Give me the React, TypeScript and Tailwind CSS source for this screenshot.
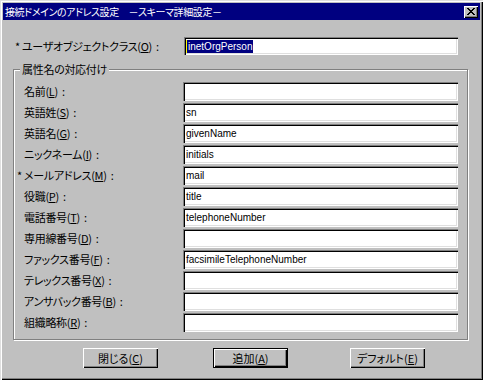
import React from "react";

const jp = "[font-family:'Noto_Sans_CJK_JP',sans-serif] [font-feature-settings:'palt']";

const rows = [
  { label: "名前", key: "L", value: "" },
  { label: "英語姓", key: "S", value: "sn" },
  { label: "英語名", key: "G", value: "givenName" },
  { label: "ニックネーム", key: "I", value: "initials" },
  { label: "メールアドレス", key: "M", value: "mail", required: true },
  { label: "役職", key: "P", value: "title" },
  { label: "電話番号", key: "T", value: "telephoneNumber" },
  { label: "専用線番号", key: "D", value: "" },
  { label: "ファックス番号", key: "F", value: "facsimileTelephoneNumber" },
  { label: "テレックス番号", key: "X", value: "" },
  { label: "アンサバック番号", key: "B", value: "" },
  { label: "組織略称", key: "R", value: "" },
];

function Label({ text, k, required }: { text: string; k: string; required?: boolean }) {
  return (
    <span className="relative whitespace-nowrap text-[11px] leading-none tracking-[-0.3px] text-black">
      {required && <span className="absolute -left-[7px] top-[3px]">*</span>}
      {text}(<span className="underline underline-offset-1">{k}</span>)<span className="ml-[4px]">:</span>
    </span>
  );
}

function Field({ value, className }: { value: string; className?: string }) {
  return (
    <div
      className={
        "flex h-[19px] items-center bg-white pl-[3px] shadow-[inset_1px_1px_0_#808080,inset_2px_2px_0_#000,inset_-1px_-1px_0_#fff,inset_-2px_-2px_0_#dfdfdf] " +
        (className ?? "")
      }
    >
      <span className="[font-family:'Liberation_Sans',sans-serif] text-[10px] leading-none text-black">
        {value}
      </span>
    </div>
  );
}

function Button({ text, k, isDefault }: { text: string; k: string; isDefault?: boolean }) {
  return (
    <div
      className={
        "flex h-[20px] w-[75px] items-center justify-center bg-[#c0c0c0] text-[11px] leading-none text-black " +
        (isDefault
          ? "shadow-[inset_0_0_0_1px_#000,inset_2px_2px_0_#fff,inset_-2px_-2px_0_#000,inset_-3px_-3px_0_#808080]"
          : "shadow-[inset_1px_1px_0_#fff,inset_-1px_-1px_0_#000,inset_-2px_-2px_0_#808080]")
      }
    >
      {text}(<span className="underline underline-offset-1">{k}</span>)
    </div>
  );
}

export default function App() {
  return (
    <div
      className={
        "flex h-[380px] w-[483px] flex-col overflow-hidden bg-[#c0c0c0] p-[3px] text-[11px] leading-none shadow-[inset_1px_1px_0_#dfdfdf,inset_2px_2px_0_#fff,inset_-1px_-1px_0_#000,inset_-2px_-2px_0_#808080] " +
        jp
      }
    >
      {/* title bar */}
      <div className="flex h-[17px] shrink-0 items-center justify-between bg-[#000080] pl-[2px] pr-[2px]">
        <span className="whitespace-nowrap text-[10px] leading-none tracking-[-0.4px] text-white">
          接続ドメインのアドレス設定　－スキーマ詳細設定－
        </span>
        <div className="flex h-[12px] w-[14px] items-center justify-center bg-[#c0c0c0] shadow-[inset_1px_1px_0_#fff,inset_-1px_-1px_0_#000,inset_-2px_-2px_0_#808080]">
          <svg width="8" height="7" viewBox="0 0 8 7" shapeRendering="crispEdges">
            <path d="M0 0h2v1H0zM6 0h2v1H6zM1 1h2v1H1zM5 1h2v1H5zM2 2h4v1H2zM3 3h2v1H3zM2 4h4v1H2zM1 5h2v1H1zM5 5h2v1H5zM0 6h2v1H0zM6 6h2v1H6z" fill="#000" />
          </svg>
        </div>
      </div>

      {/* object class */}
      <div className="mt-[17px] flex shrink-0 items-center pl-[19px] pr-[22px]">
        <div className="flex-1">
          <Label text="ユーザオブジェクトクラス" k="O" required />
        </div>
        <div className="flex h-[18px] w-[274px] items-center bg-white pl-[2px] shadow-[inset_1px_1px_0_#808080,inset_2px_2px_0_#000,inset_-1px_-1px_0_#fff,inset_-2px_-2px_0_#dfdfdf]">
          <span className="h-[13px] w-[1px] bg-[#ffff00]" />
          <span className="bg-[#000080] px-[1px] [font-family:'Liberation_Sans',sans-serif] text-[10px] leading-[13px] text-white">
            inetOrgPerson
          </span>
        </div>
      </div>

      {/* group box */}
      <div className="relative ml-[10px] mr-[12px] mt-[14px] shrink-0 border border-[#808080] pb-[7px] pl-[10px] pr-[9px] pt-[12px] shadow-[1px_1px_0_#fff,inset_1px_1px_0_#fff]">
        <span className="absolute -top-[6px] left-[6px] bg-[#c0c0c0] px-[2px] text-[11px] leading-none tracking-[-0.3px] text-black">
          属性名の対応付け
        </span>
        <div className="flex flex-col gap-[2px]">
          {rows.map((r) => (
            <div key={r.key} className="flex items-center">
              <div className="flex-1">
                <Label text={r.label} k={r.key} required={r.required} />
              </div>
              <Field value={r.value} className="w-[275px]" />
            </div>
          ))}
        </div>
      </div>

      {/* buttons */}
      <div className="mt-[8px] flex shrink-0 pl-[80px]">
        <Button text="閉じる" k="C" />
        <div className="ml-[55px]">
          <Button text="追加" k="A" isDefault />
        </div>
        <div className="ml-[62px]">
          <Button text="デフォルト" k="E" />
        </div>
      </div>
    </div>
  );
}
